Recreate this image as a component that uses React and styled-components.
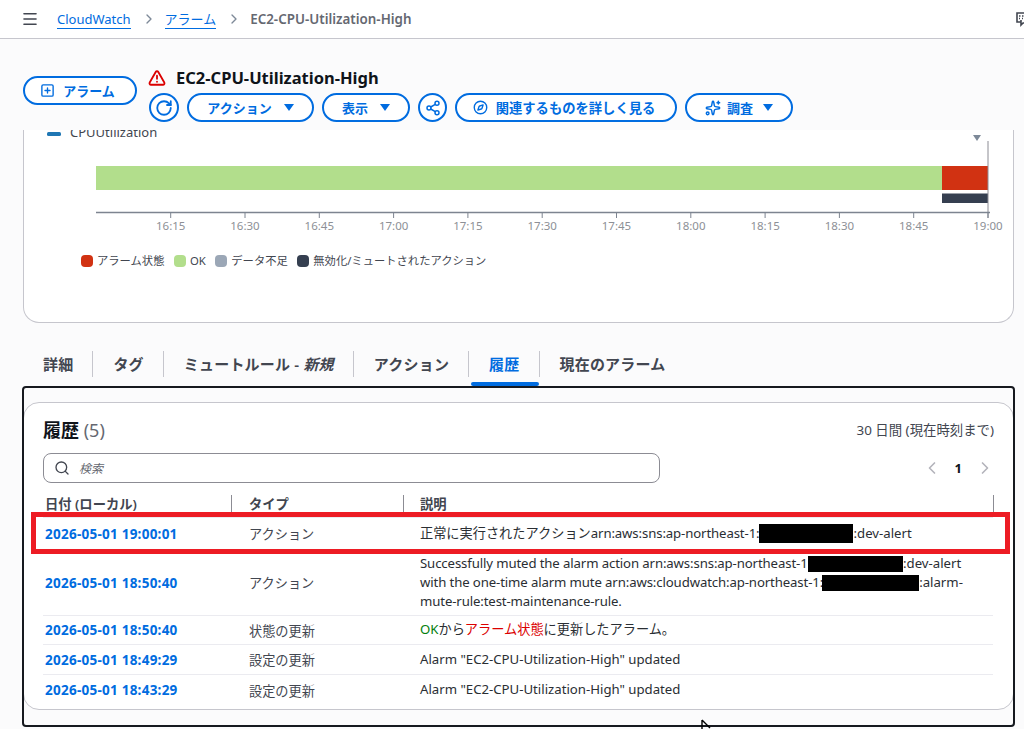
import React from 'react';
import styled, { createGlobalStyle } from 'styled-components';
import { Menu, ChevronRight, ChevronLeft, TriangleAlert, RotateCw, Share2, Compass, Sparkles, Search, SquarePlus } from 'lucide-react';

const GlobalStyle = createGlobalStyle`
  html, body {
    margin: 0;
    padding: 0;
    background: #fbfbfc;
  }
  body {
    font-family: "Noto Sans", "Noto Sans CJK JP", sans-serif;
    color: #0f141a;
  }
`;

const blue = '#006ce0';
const line = '#c6c6cd';

const Page = styled.div`
  width: 1024px;
  height: 729px;
  overflow: hidden;
  position: relative;
  background: #fbfbfc;
`;

const TopBar = styled.div`
  height: 38px;
  box-sizing: content-box;
  background: #fff;
  border-bottom: 1px solid ${line};
  display: flex;
  align-items: center;
  padding-left: 21px;
  color: #424650;
`;

const Crumbs = styled.nav`
  display: flex;
  align-items: center;
  margin-left: 18px;
  font-size: 13px;
  color: #6b7280;
`;

const CrumbLink = styled.a`
  color: ${blue};
  border-bottom: 1px solid ${blue};
  line-height: 18px;
`;

const CrumbSep = styled.span`
  display: flex;
  margin: 0 8px 0 10px;
  color: #7d8998;
`;

const CrumbCurrent = styled.span`
  font-weight: 600;
  font-size: 13.4px;
  color: #656871;
`;

const CornerIcon = styled.svg`
  margin-left: auto;
  margin-right: -7px;
`;

const Header = styled.header`
  height: 91px;
  display: flex;
  padding-left: 23px;
  box-sizing: border-box;
`;

const PillButton = styled.button`
  height: 29px;
  width: ${p => p.$w}px;
  box-sizing: border-box;
  border: 2px solid ${blue};
  border-radius: 15px;
  background: #fff;
  color: ${blue};
  font: 600 ${p => p.$fs || 13}px "Noto Sans", "Noto Sans CJK JP", sans-serif;
  display: flex;
  align-items: center;
  justify-content: center;
  gap: ${p => p.$gap || 8}px;
  padding: 0 ${p => p.$pr || 0}px 0 0;
  flex: none;
`;

const AlarmButton = styled(PillButton)`
  margin-top: 37px;
`;

const RoundButton = styled(PillButton)`
  width: ${p => p.$w || 30}px;
  border-radius: 50%;
`;

const Caret = styled.span`
  width: 0;
  height: 0;
  border-left: 5px solid transparent;
  border-right: 5px solid transparent;
  border-top: 7px solid ${blue};
  margin-left: 4px;
`;

const HeaderMain = styled.div`
  margin-left: 12px;
  padding-top: 30px;
`;

const TitleRow = styled.div`
  display: flex;
  align-items: center;
  gap: 10px;
  height: 18px;
  margin: 0 0 6px -1px;
  color: #db0000;
`;

const Title = styled.h1`
  margin: 0;
  font-size: 16.5px;
  font-weight: 700;
  line-height: 18px;
  color: #0f141a;
`;

const ActionRow = styled.div`
  display: flex;
  gap: 8px;
`;

const ChartCard = styled.section`
  margin: 0 10px 0 23px;
  height: 193px;
  box-sizing: border-box;
  background: #fff;
  border: 1px solid ${line};
  border-top: 0;
  border-radius: 0 0 16px 16px;
`;

const ChartSvg = styled.svg`
  display: block;
  width: 989px;
  height: 110px;
`;

const Legend = styled.div`
  display: flex;
  align-items: center;
  padding: 13px 0 0 57px;
  font-size: 11.3px;
  line-height: 16px;
  color: #424650;
`;

const LegendItem = styled.div`
  display: flex;
  align-items: center;
  gap: 4px;
  margin-right: 9.5px;
`;

const Swatch = styled.span`
  width: 12px;
  height: 12px;
  border-radius: 4px;
  background: ${p => p.$color};
`;

const Tabs = styled.div`
  display: flex;
  margin: 28px 0 0 23px;
  height: 35px;
`;

const Tab = styled.div`
  position: relative;
  height: 35px;
  padding: 0 20px;
  font-size: 15px;
  font-weight: 600;
  letter-spacing: 0.2px;
  line-height: 26px;
  color: ${p => (p.$active ? blue : '#424650')};
  white-space: nowrap;

  &:not(:last-child)::after {
    content: '';
    position: absolute;
    right: 0;
    top: 0;
    height: 26px;
    width: 1px;
    background: ${line};
  }

  ${p => p.$active && `
    &::before {
      content: '';
      position: absolute;
      left: 2px;
      right: 1px;
      bottom: 0;
      height: 4px;
      border-radius: 2px;
      background: ${blue};
    }
  `}
`;

const PanelWrap = styled.div`
  position: relative;
  padding-top: 16px;
`;

const BlackFrame = styled.div`
  position: absolute;
  left: 22px;
  top: 0;
  width: 993px;
  height: 341px;
  box-sizing: border-box;
  border: 2px solid #16191f;
  border-radius: 4px;
  pointer-events: none;
`;

const Panel = styled.section`
  position: relative;
  margin: 0 10px 0 23px;
  height: 308px;
  box-sizing: border-box;
  padding: 13px 20px 0 19px;
  background: #fff;
  border: 1px solid ${line};
  border-radius: 16px;
`;

const PanelHead = styled.div`
  display: flex;
  justify-content: space-between;
  align-items: center;
  height: 26px;
`;

const PanelTitle = styled.h2`
  margin: 0;
  font-size: 18px;
  font-weight: 700;
  color: #0f141a;
`;

const Count = styled.span`
  font-weight: 400;
  color: #656871;
`;

const RangeText = styled.span`
  font-size: 13.4px;
  color: #424650;
  margin-right: -1px;
`;

const SearchRow = styled.div`
  display: flex;
  justify-content: space-between;
  align-items: center;
  margin-top: 11px;
  height: 30px;
`;

const SearchBox = styled.div`
  width: 617px;
  height: 30px;
  box-sizing: border-box;
  border: 1px solid #8c8c94;
  border-radius: 8px;
  background: #fff;
  display: flex;
  align-items: center;
  gap: 9px;
  padding-left: 10px;
  color: #424650;
`;

const Placeholder = styled.span`
  font-size: 12px;
  font-style: italic;
  color: #656871;
`;

const Pager = styled.div`
  display: flex;
  align-items: center;
  gap: 13px;
  color: #b4b4bb;
  margin-right: -2px;
`;

const PageNum = styled.span`
  font-size: 13px;
  font-weight: 700;
  color: #0f141a;
`;

const TableHead = styled.div`
  display: grid;
  grid-template-columns: 189px 172px 1fr;
  margin-top: 12px;
  height: 23px;
  box-sizing: border-box;
  border-bottom: 1px solid #ebebf0;
  font-size: 13.3px;
  font-weight: 600;
  color: #424650;
`;

const HeadCell = styled.div`
  position: relative;
  padding-left: ${p => p.$pad}px;
  line-height: 19px;

  &::after {
    content: '';
    position: absolute;
    right: ${p => (p.$last ? -1 : 0)}px;
    top: 0;
    height: 17px;
    width: 1px;
    background: #8c8c94;
  }
`;

const Row = styled.div`
  display: grid;
  grid-template-columns: 189px 172px 1fr;
  align-items: center;
  box-sizing: border-box;
  height: ${p => p.$h}px;
  border-bottom: ${p => (p.$last ? '0' : `1px solid #ebebf0`)};
  font-size: 13.2px;
  color: #0f141a;
`;

const DateCell = styled.a`
  padding-left: 2px;
  font-size: 13.5px;
  letter-spacing: 0.25px;
  font-weight: 700;
  color: ${blue};
`;

const TypeCell = styled.div`
  padding-left: 17px;
  color: #424650;
`;

const DescCell = styled.div`
  padding-left: 16px;
  line-height: 19.2px;
  white-space: nowrap;
  color: #2a2e33;
`;

const ArnText = styled.span`
  letter-spacing: -0.12px;
`;

const Redacted = styled.span`
  display: inline-block;
  width: ${p => p.$w}px;
  height: ${p => p.$h}px;
  margin-left: ${p => p.$ml || 0}px;
  vertical-align: middle;
  background: #000;
`;

const StateText = styled.span`
  color: ${p => p.$color};
`;

const RedBox = styled.div`
  position: absolute;
  left: 7px;
  top: 109px;
  width: 979px;
  height: 42px;
  box-sizing: border-box;
  border: 5px solid #ed1c24;
  pointer-events: none;
`;

const Cursor = styled.svg`
  position: absolute;
  left: 701px;
  top: 719px;
`;

const times = ['16:15', '16:30', '16:45', '17:00', '17:15', '17:30', '17:45', '18:00', '18:15', '18:30', '18:45', '19:00'];

const AlarmChart = () => (
  <ChartSvg viewBox="24 130 989 110">
    <rect x="47" y="132" width="14" height="4" rx="1.5" fill="#1f77b4" />
    <text x="70" y="136.5" fontSize="13" fill="#424650">CPUUtilization</text>
    <rect x="96" y="166" width="846" height="24" fill="#b2de8c" />
    <rect x="942" y="166" width="46" height="24" fill="#d13212" />
    <rect x="942" y="193.5" width="46" height="9.5" fill="#353f50" />
    <path d="M973 135h8l-4 6z" fill="#7d8998" />
    <path d="M988 141V218" stroke="#8c8c94" strokeWidth="1" />
    <path d="M96 212.5H990" stroke="#7d8490" strokeWidth="1.6" />
    {times.map((t, i) => {
      const x = 170.7 + i * 74.3;
      return (
        <g key={t}>
          <path d={`M${x} 212V218`} stroke="#7d8490" strokeWidth="1" />
          <text x={x} y="230" fontSize="11.5" textAnchor="middle" fill="#8d9096">{t}</text>
        </g>
      );
    })}
  </ChartSvg>
);

const rows = [
  { date: '2026-05-01 18:50:40', type: 'アクション', h: 66, desc: (
    <>
      <ArnText>Successfully muted the alarm action arn:aws:sns:ap-northeast-1:</ArnText><Redacted $w={95} $h={16} $ml={-3} />:dev-alert<br />
      <ArnText>with the one-time alarm mute arn:aws:cloudwatch:ap-northeast-1:</ArnText><Redacted $w={97} $h={16} $ml={-1} />:alarm-<br />
      <ArnText>mute-rule:test-maintenance-rule.</ArnText>
    </>
  ) },
  { date: '2026-05-01 18:50:40', type: '状態の更新', h: 29, desc: (
    <>
      <StateText $color="#037f0c">OK</StateText>から<StateText $color="#db0000">アラーム状態</StateText>に更新したアラーム。
    </>
  ) },
  { date: '2026-05-01 18:49:29', type: '設定の更新', h: 30, desc: 'Alarm "EC2-CPU-Utilization-High" updated' },
  { date: '2026-05-01 18:43:29', type: '設定の更新', h: 30, last: true, desc: 'Alarm "EC2-CPU-Utilization-High" updated' },
];

const App = () => (
  <Page>
    <GlobalStyle />
    <TopBar>
      <Menu size={18} strokeWidth={2.2} />
      <Crumbs>
        <CrumbLink>CloudWatch</CrumbLink>
        <CrumbSep><ChevronRight size={16} strokeWidth={2} /></CrumbSep>
        <CrumbLink>アラーム</CrumbLink>
        <CrumbSep><ChevronRight size={16} strokeWidth={2} /></CrumbSep>
        <CrumbCurrent>EC2-CPU-Utilization-High</CrumbCurrent>
      </Crumbs>
      <CornerIcon width="16" height="16" viewBox="0 0 16 16" fill="none" stroke="#424650" strokeWidth="1.6">
        <path d="M6 11H2V2h12v9h-3" />
        <path d="M4 5h8M4 7.5h1M7 7.5h1M10 7.5h1" strokeDasharray="1.5 1.5" />
        <path d="M6 9v5l2-2h3" />
      </CornerIcon>
    </TopBar>

    <Header>
      <AlarmButton $w={114} $gap={8} $pr={5}>
        <SquarePlus size={15} strokeWidth={2.2} />
        アラーム
      </AlarmButton>
      <HeaderMain>
        <TitleRow>
          <TriangleAlert size={18} strokeWidth={2.4} />
          <Title>EC2-CPU-Utilization-High</Title>
        </TitleRow>
        <ActionRow>
          <RoundButton><RotateCw size={18} strokeWidth={2.4} /></RoundButton>
          <PillButton $w={127}>アクション<Caret /></PillButton>
          <PillButton $w={88}>表示<Caret /></PillButton>
          <RoundButton $w={29}><Share2 size={16} strokeWidth={2.2} /></RoundButton>
          <PillButton $w={222} $gap={8} $fs={13.3} $pr={4}><Compass size={15} strokeWidth={2.2} />関連するものを詳しく見る</PillButton>
          <PillButton $w={108} $gap={6}><Sparkles size={16} strokeWidth={2.2} />調査<Caret /></PillButton>
        </ActionRow>
      </HeaderMain>
    </Header>

    <ChartCard>
      <AlarmChart />
      <Legend>
        <LegendItem><Swatch $color="#d13212" />アラーム状態</LegendItem>
        <LegendItem><Swatch $color="#b2de8c" />OK</LegendItem>
        <LegendItem><Swatch $color="#9ba7b6" />データ不足</LegendItem>
        <LegendItem><Swatch $color="#353f50" />無効化/ミュートされたアクション</LegendItem>
      </Legend>
    </ChartCard>

    <Tabs>
      <Tab>詳細</Tab>
      <Tab>タグ</Tab>
      <Tab>ミュートルール - <i>新規</i></Tab>
      <Tab>アクション</Tab>
      <Tab $active>履歴</Tab>
      <Tab>現在のアラーム</Tab>
    </Tabs>

    <PanelWrap>
      <Panel>
        <PanelHead>
          <PanelTitle>履歴 <Count>(5)</Count></PanelTitle>
          <RangeText>30 日間 (現在時刻まで)</RangeText>
        </PanelHead>
        <SearchRow>
          <SearchBox>
            <Search size={16} strokeWidth={2} />
            <Placeholder>検索</Placeholder>
          </SearchBox>
          <Pager>
            <ChevronLeft size={20} strokeWidth={2} />
            <PageNum>1</PageNum>
            <ChevronRight size={20} strokeWidth={2} />
          </Pager>
        </SearchRow>
        <TableHead>
          <HeadCell $pad={2}>日付 (ローカル)</HeadCell>
          <HeadCell $pad={17}>タイプ</HeadCell>
          <HeadCell $pad={16} $last>説明</HeadCell>
        </TableHead>
        <Row $h={32}>
          <DateCell>2026-05-01 19:00:01</DateCell>
          <TypeCell>アクション</TypeCell>
          <DescCell>正常に実行されたアクション<ArnText>arn:aws:sns:ap-northeast-1:</ArnText><Redacted $w={94} $h={19} />:dev-alert</DescCell>
        </Row>
        {rows.map((r, i) => (
          <Row key={i} $h={r.h} $last={r.last}>
            <DateCell>{r.date}</DateCell>
            <TypeCell>{r.type}</TypeCell>
            <DescCell>{r.desc}</DescCell>
          </Row>
        ))}
        <RedBox />
      </Panel>
      <BlackFrame />
    </PanelWrap>

    <Cursor width="14" height="12" viewBox="0 0 14 12">
      <path d="M1 1l0 10M1 1l8 8" stroke="#000" strokeWidth="1.4" fill="none" />
    </Cursor>
  </Page>
);

export default App;
